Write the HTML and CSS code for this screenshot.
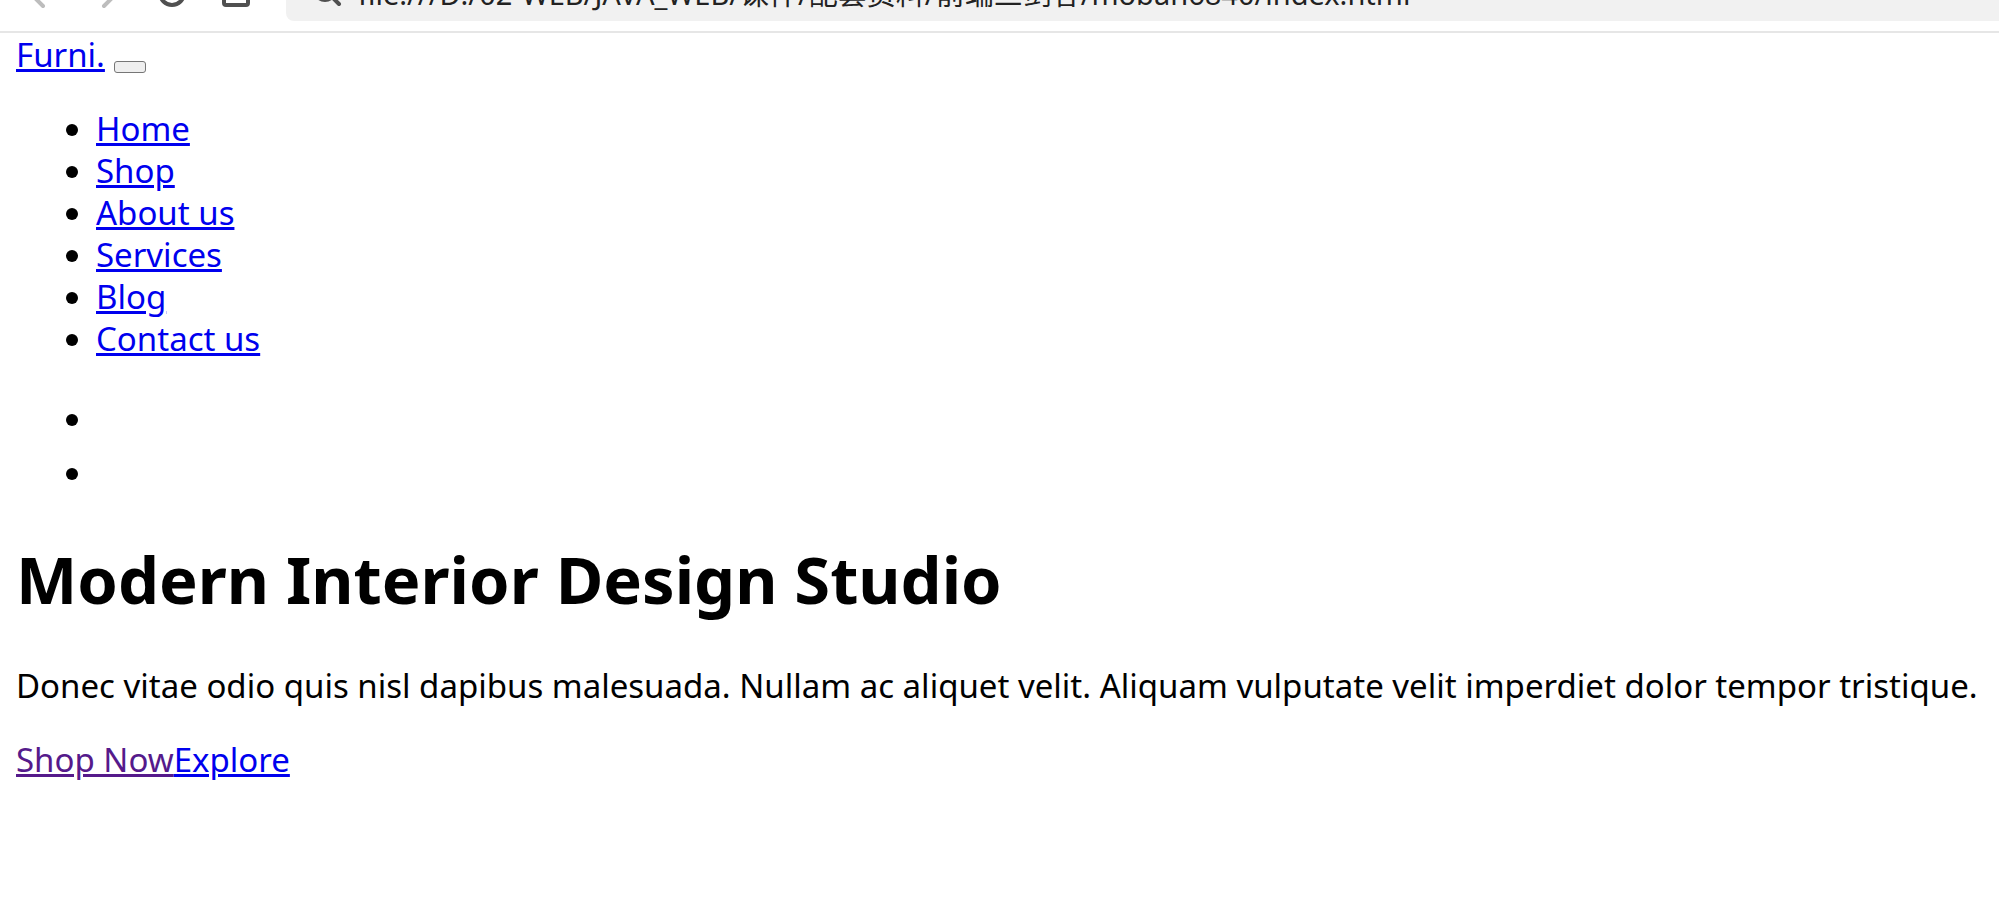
FILE: index.html
```html
<!DOCTYPE html>
<html lang="en">
<head>
<meta charset="utf-8">
<title>Furni</title>
<link rel="stylesheet" href="styles.css">
</head>
<body>
<header class="toolbar">
  <button class="tool tool-off" aria-label="Back"><svg width="48" height="48" viewBox="0 0 48 48"><path d="M27 -1 11 15l16 16"/></svg></button>
  <button class="tool tool-off" aria-label="Forward"><svg width="48" height="48" viewBox="0 0 48 48"><path d="M40 -1l0 0M24 31l16-16"/></svg></button>
  <button class="tool" aria-label="Reload"><svg width="48" height="48" viewBox="0 0 48 48"><circle cx="28" cy="18" r="12"/></svg></button>
  <button class="tool" aria-label="Home"><svg width="48" height="48" viewBox="0 0 48 48"><path d="M16 12 28 4l12 8v16q0 2-2 2H18q-2 0-2-2z"/></svg></button>
  <div class="address">
    <svg class="search" width="32" height="48" viewBox="0 0 32 48"><circle cx="11" cy="20" r="10"/><path d="M18 27l7 7"/></svg>
    <input class="url" type="text" aria-label="Address" value="file:///D:/02-WEB/JAVA_WEB/课件/配套资料/前端三剑客/moban6840/index.html">
  </div>
</header>
<main class="page">
  <nav>
    <a href="#">Furni.</a>
    <button class="toggler" aria-label="Toggle navigation"></button>
    <ul class="menu">
      <li><a href="#">Home</a></li>
      <li><a href="#">Shop</a></li>
      <li><a href="#">About us</a></li>
      <li><a href="#">Services</a></li>
      <li><a href="#">Blog</a></li>
      <li><a href="#">Contact us</a></li>
    </ul>
    <ul class="menu icons">
      <li></li>
      <li></li>
    </ul>
  </nav>
  <h1 class="title">Modern Interior Design Studio</h1>
  <p class="text">Donec vitae odio quis nisl dapibus malesuada. Nullam ac aliquet velit. Aliquam vulputate velit imperdiet dolor tempor tristique.</p>
  <p class="text"><a class="seen" href="#">Shop Now</a><a href="#">Explore</a></p>
</main>
</body>
</html>
```
FILE: styles.css
```css
body {
  margin: 0;
  background: #fff;
  color: #000;
  font: 33px/42px "Noto Sans", "Noto Sans CJK SC", sans-serif;
}
.toolbar {
  display: flex;
  align-items: flex-end;
  gap: 16px;
  height: 31px;
  padding-left: 16px;
  border-bottom: 2px solid #e6e6e6;
  overflow: hidden;
}
.tool {
  flex: none;
  width: 48px;
  height: 48px;
  margin-bottom: 8px;
  padding: 0;
  border: 0;
  background: none;
}
.toolbar svg {
  display: block;
  flex: none;
  fill: none;
  stroke: #505050;
  stroke-width: 4;
  stroke-linecap: round;
}
.toolbar .tool-off svg {
  stroke: #bdbdbd;
}
.address {
  display: flex;
  flex: 1;
  gap: 12px;
  margin: 0 0 10px 14px;
  padding: 0 0 3px 28px;
  border-radius: 8px 0 0 8px;
  background: #f1f1f1;
}
.url {
  flex: 1;
  min-width: 0;
  height: 48px;
  padding: 0;
  border: 0;
  background: none;
  color: #222;
  font: 29px/48px "Noto Sans", "Noto Sans CJK SC", sans-serif;
}
.page {
  padding: 1px 16px 0;
}
a {
  color: #0000ee;
  text-decoration-thickness: 3px;
  text-underline-offset: 2px;
}
.seen {
  color: #551a8b;
}
.toggler {
  width: 32px;
  height: 12px;
  padding: 0;
  border: 1px solid #767676;
  border-radius: 3px;
  background: #efefef;
  vertical-align: -5px;
}
.menu {
  margin: 32px 0;
  padding-left: 80px;
}
.icons {
  margin-bottom: 0;
  line-height: 54px;
}
.title {
  margin: 37px 0 44px;
  font-size: 65px;
  line-height: 84px;
}
.text {
  margin: 0 0 32px;
}
```
